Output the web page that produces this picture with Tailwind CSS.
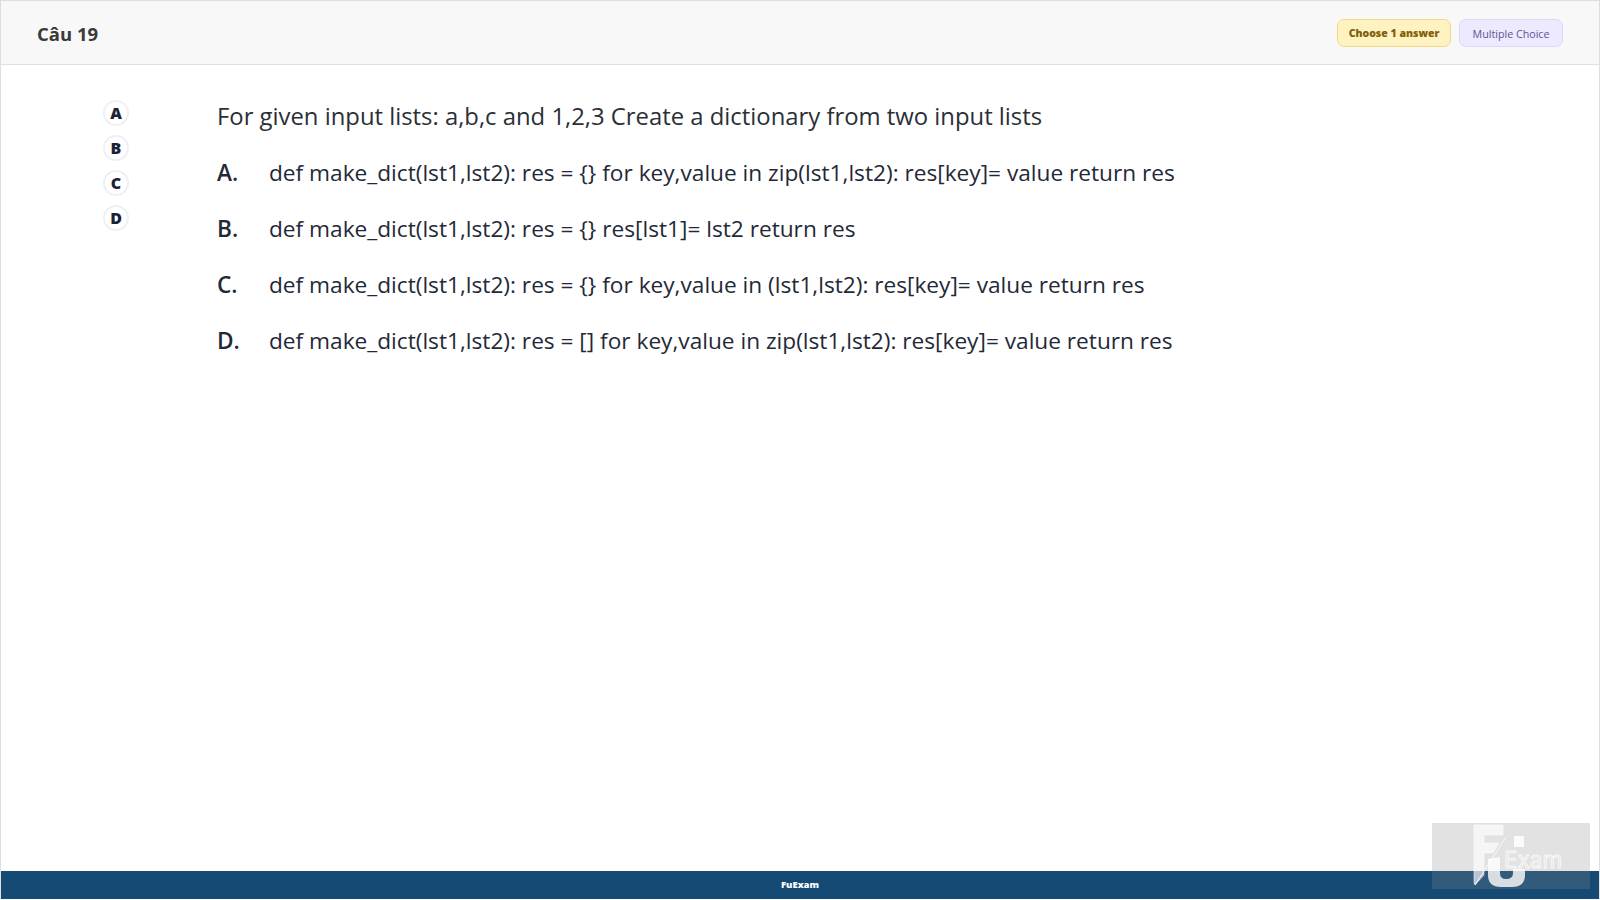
<!DOCTYPE html>
<html lang="en">
<head>
  <meta charset="UTF-8" />
  <title>FuExam</title>
  <script src="https://cdn.jsdelivr.net/npm/@tailwindcss/browser@4"></script>
</head>
<body class="bg-white text-[#1f2937] font-['Open_Sans',sans-serif] overflow-hidden">
  <div class="relative flex flex-col h-[900px] w-[1600px] border-x border-t border-[#dedede]">

    <!-- Header -->
    <header class="flex items-center justify-between h-[64px] shrink-0 pt-[2px] pl-[36px] pr-[36px] bg-[#f8f8f8] border-b border-[#e0e0e0]">
      <h1 class="text-[18.5px] font-bold text-[#3a3a3a]">Câu 19</h1>
      <div class="flex items-center gap-[8px] mb-[2px]">
        <span class="flex items-center justify-center w-[114px] h-[28px] pt-[3px] rounded-[7px] bg-[#fef3c0] border border-[#f1d98a] text-[10.5px] font-black text-[#7f5f0c]">Choose 1 answer</span>
        <span class="flex items-center justify-center w-[104px] h-[28px] pt-[3px] rounded-[7px] bg-[#ede9fe] border border-[#ddd8f8] text-[10.7px] text-[#5b5794]">Multiple Choice</span>
      </div>
    </header>

    <!-- Body -->
    <main class="flex flex-1 pt-[34px] pl-[102px]">
      <div class="flex flex-col gap-[9px] w-[114px] shrink-0 pt-[1px]">
        <span class="flex items-center justify-center w-[26px] h-[26px] rounded-full bg-white border-2 border-[#eef0f4] text-[16px] font-black text-[#1a2236]">A</span>
        <span class="flex items-center justify-center w-[26px] h-[26px] rounded-full bg-white border-2 border-[#eef0f4] text-[16px] font-black text-[#1a2236]">B</span>
        <span class="flex items-center justify-center w-[26px] h-[26px] rounded-full bg-white border-2 border-[#eef0f4] text-[16px] font-black text-[#1a2236]">C</span>
        <span class="flex items-center justify-center w-[26px] h-[26px] rounded-full bg-white border-2 border-[#eef0f4] text-[16px] font-black text-[#1a2236]">D</span>
      </div>
      <div class="flex flex-col gap-[22px] text-[22.67px] leading-[34px]">
        <p class="mb-[1px] text-[23.85px] text-[#2b2f36]">For given input lists: a,b,c and 1,2,3 Create a dictionary from two input lists</p>
        <div class="flex"><span class="w-[52px] font-semibold">A.</span><span>def make_dict(lst1,lst2): res = {} for key,value in zip(lst1,lst2): res[key]= value return res</span></div>
        <div class="flex"><span class="w-[52px] font-semibold">B.</span><span>def make_dict(lst1,lst2): res = {} res[lst1]= lst2 return res</span></div>
        <div class="flex"><span class="w-[52px] font-semibold">C.</span><span>def make_dict(lst1,lst2): res = {} for key,value in (lst1,lst2): res[key]= value return res</span></div>
        <div class="flex"><span class="w-[52px] font-semibold">D.</span><span>def make_dict(lst1,lst2): res = [] for key,value in zip(lst1,lst2): res[key]= value return res</span></div>
      </div>
    </main>

    <!-- Footer -->
    <footer class="flex items-center justify-center h-[28px] mb-[1px] shrink-0 bg-[#154a75] text-[9.5px] font-black text-white">FuExam</footer>

    <!-- Watermark -->
    <div class="absolute left-[1431px] top-[822px] w-[158px] h-[66px] bg-[#8c8c8c]/25">
      <svg width="158" height="66" viewBox="0 0 158 66" fill="none">
        <path d="M42 2H71V12H52V20H67L61 30H52V52L43 62L42 60Z" fill="#fff" fill-opacity=".65" stroke="#fff" stroke-opacity=".5"/>
        <path d="M74 14L43 62" stroke="#fff" stroke-opacity=".8"/>
        <path d="M56 36L68 34V50Q68 56 74 56Q81 56 81 50V46H93V52Q93 64 80 64H69Q56 64 56 52Z" fill="#fff" fill-opacity=".8"/>
        <rect x="82" y="13" width="10" height="11" fill="#fff" fill-opacity=".85"/>
        <text x="72" y="45" font-family="Inter, sans-serif" font-size="22.5" fill="none" stroke="#fff" stroke-opacity=".75">Exam</text>
      </svg>
    </div>
  </div>
</body>
</html>
